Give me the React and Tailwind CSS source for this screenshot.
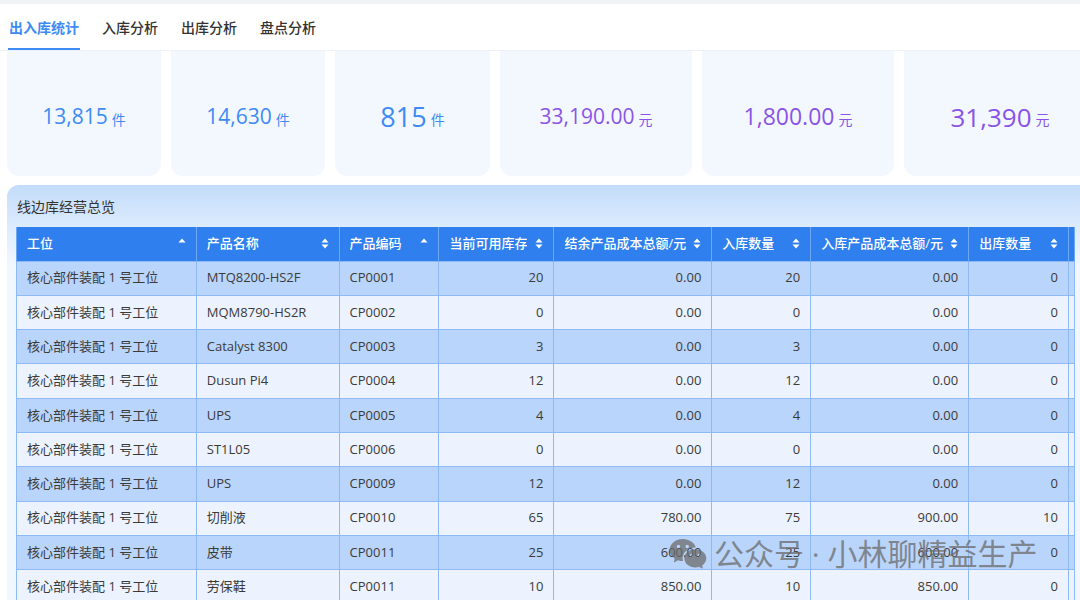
import { RiWechatFill } from "react-icons/ri";

const font = { fontFamily: '"Open Sans", "Noto Sans CJK SC", sans-serif' };

const tabs = ["出入库统计", "入库分析", "出库分析", "盘点分析"];

const cards = [
  { value: "13,815", unit: "件", w: "w-[154px]", size: "text-[21px]", color: "text-[#3e8bf4]" },
  { value: "14,630", unit: "件", w: "w-[154px]", size: "text-[21px]", color: "text-[#3e8bf4]" },
  { value: "815", unit: "件", w: "w-[155px]", size: "text-[27px]", color: "text-[#3e8bf4]" },
  { value: "33,190.00", unit: "元", w: "w-[192px]", size: "text-[21px]", color: "text-[#8a55e6]" },
  { value: "1,800.00", unit: "元", w: "w-[192px]", size: "text-[23px]", color: "text-[#8a55e6]" },
  { value: "31,390", unit: "元", w: "w-[192px]", size: "text-[26px]", color: "text-[#8a55e6]" },
];

// sort: "asc" shows only the up arrow, "both" shows up + down
const columns = [
  { title: "工位", w: "w-[180px]", sort: "asc", align: "left" },
  { title: "产品名称", w: "w-[143px]", sort: "both", align: "left" },
  { title: "产品编码", w: "w-[100px]", sort: "asc", align: "left" },
  { title: "当前可用库存", w: "w-[115px]", sort: "both", align: "right" },
  { title: "结余产品成本总额/元", w: "w-[158px]", sort: "both", align: "right" },
  { title: "入库数量", w: "w-[99px]", sort: "both", align: "right" },
  { title: "入库产品成本总额/元", w: "w-[158px]", sort: "both", align: "right" },
  { title: "出库数量", w: "w-[100px]", sort: "both", align: "right" },
];

const station = "核心部件装配 1 号工位";
const rows = [
  ["MTQ8200-HS2F", "CP0001", "20", "0.00", "20", "0.00", "0"],
  ["MQM8790-HS2R", "CP0002", "0", "0.00", "0", "0.00", "0"],
  ["Catalyst 8300", "CP0003", "3", "0.00", "3", "0.00", "0"],
  ["Dusun Pi4", "CP0004", "12", "0.00", "12", "0.00", "0"],
  ["UPS", "CP0005", "4", "0.00", "4", "0.00", "0"],
  ["ST1L05", "CP0006", "0", "0.00", "0", "0.00", "0"],
  ["UPS", "CP0009", "12", "0.00", "12", "0.00", "0"],
  ["切削液", "CP0010", "65", "780.00", "75", "900.00", "10"],
  ["皮带", "CP0011", "25", "600.00", "25", "600.00", "0"],
  ["劳保鞋", "CP0011", "10", "850.00", "10", "850.00", "0"],
];

function SortIcon({ sort }) {
  return (
    <svg width="8" height="11" viewBox="0 0 8 11" className="shrink-0">
      <path d="M4 0.5 L7.5 4.5 L0.5 4.5 Z" fill="white" />
      {sort === "both" && <path d="M4 10.5 L7.5 6.5 L0.5 6.5 Z" fill="white" />}
    </svg>
  );
}

export default function App() {
  return (
    <div className="relative h-[600px] w-[1080px] overflow-hidden bg-white text-[#333]" style={font}>
      <div className="h-[4px] bg-[#f0f2f5]" />

      {/* tabs */}
      <div className="flex h-[47px] items-stretch gap-[21px] border-b border-[#eef2f8] pl-2">
        {tabs.map((t, i) => (
          <div
            key={t}
            className={[
              "flex items-center border-b-2 px-px pt-[2px] text-[14px]",
              i === 0 ? "border-[#3e8bf4] font-semibold text-[#3e8bf4]" : "border-transparent font-medium text-[#333]",
            ].join(" ")}
          >
            {t}
          </div>
        ))}
      </div>

      {/* stat cards */}
      <div className="flex h-[125px] gap-[10px] pl-[7px]">
        {cards.map((c) => (
          <div
            key={c.value}
            className={`${c.w} flex shrink-0 items-center justify-center rounded-b-xl bg-[#f3f8ff] pt-[6px]`}
          >
            <span className={`${c.size} ${c.color} leading-none`}>{c.value}</span>
            <span className={`${c.color} ml-1 self-center pt-[6px] text-[14px] leading-none`}>{c.unit}</span>
          </div>
        ))}
      </div>

      {/* overview panel */}
      <div className="ml-[7px] mt-[9px] rounded-tl-xl bg-[linear-gradient(180deg,#c3dcfb_0px,#dbeafd_40px,#f1f7ff_80px)] pl-[9px] pr-[5px]">
        <div className="flex h-[42px] items-center pl-[1px] text-[14px] text-[#333]">线边库经营总览</div>
        <table className="table-fixed border-collapse text-[13px]">
          <colgroup>
            {columns.map((c) => (
              <col key={c.title} className={c.w} />
            ))}
            <col className="w-[6px]" />
          </colgroup>
          <thead>
            <tr className="h-[34px] bg-[#2f80ee] text-white">
              {columns.map((c) => (
                <th key={c.title} className="border-x border-[#6ea8f5] px-[10px] text-left font-medium">
                  <div className="flex items-center justify-between">
                    <span className="truncate">{c.title}</span>
                    <SortIcon sort={c.sort} />
                  </div>
                </th>
              ))}
              <th className="border-x border-[#6ea8f5]" />
            </tr>
          </thead>
          <tbody>
            {rows.map((r, i) => (
              <tr
                key={i}
                className={["h-[34.3px]", i % 2 === 0 ? "bg-[#bad5fb]" : "bg-[#ecf3fe]"].join(" ")}
              >
                {[station, ...r].map((v, j) => (
                  <td
                    key={j}
                    className={[
                      "truncate border border-[#8dbaf5] px-[10px] text-[#3a3a3a]",
                      columns[j].align === "right" ? "text-right" : "text-left",
                    ].join(" ")}
                  >
                    {v}
                  </td>
                ))}
                <td className="border border-[#8dbaf5]" />
              </tr>
            ))}
          </tbody>
        </table>
      </div>

      {/* watermark */}
      <div className="pointer-events-none absolute left-[668px] top-[534px] flex items-center gap-[6px] text-[#6b6b6b]/75">
        <RiWechatFill className="h-[40px] w-[40px]" />
        <span className="text-[30px] leading-none">公众号 · 小林聊精益生产</span>
      </div>
    </div>
  );
}
